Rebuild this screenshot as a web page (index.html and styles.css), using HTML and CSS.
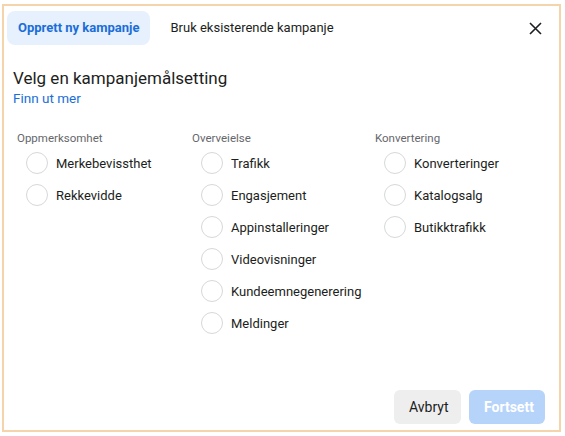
FILE: index.html
```html
<!DOCTYPE html>
<html lang="no">
<head>
<meta charset="utf-8">
<link rel="stylesheet" href="styles.css">
</head>
<body>
<div class="frame">
  <div class="tabs">
    <div class="tab active">Opprett ny kampanje</div>
    <div class="tab">Bruk eksisterende kampanje</div>
    <button class="close" aria-label="Lukk">
      <svg width="13" height="13" viewBox="0 0 13 13"><path d="M1 1L12 12M12 1L1 12" stroke="#1c1e21" stroke-width="1.6" fill="none"/></svg>
    </button>
  </div>
  <div class="intro">
    <h1 class="title">Velg en kampanjemålsetting</h1>
    <a class="link">Finn ut mer</a>
  </div>
  <div class="cols">
    <div class="col c1">
      <div class="label">Oppmerksomhet</div>
      <div class="opt"><span class="radio"></span>Merkebevissthet</div>
      <div class="opt"><span class="radio"></span>Rekkevidde</div>
    </div>
    <div class="col c2">
      <div class="label">Overveielse</div>
      <div class="opt"><span class="radio"></span>Trafikk</div>
      <div class="opt"><span class="radio"></span>Engasjement</div>
      <div class="opt"><span class="radio"></span>Appinstalleringer</div>
      <div class="opt"><span class="radio"></span>Videovisninger</div>
      <div class="opt"><span class="radio"></span>Kundeemnegenerering</div>
      <div class="opt"><span class="radio"></span>Meldinger</div>
    </div>
    <div class="col c3">
      <div class="label">Konvertering</div>
      <div class="opt"><span class="radio"></span>Konverteringer</div>
      <div class="opt"><span class="radio"></span>Katalogsalg</div>
      <div class="opt"><span class="radio"></span>Butikktrafikk</div>
    </div>
  </div>
  <div class="footer">
    <button class="btn cancel">Avbryt</button>
    <button class="btn next">Fortsett</button>
  </div>
</div>
</body>
</html>
```
FILE: styles.css
```css
html, body {
  margin: 0;
  padding: 0;
  background: #fff;
}
body {
  font-family: Roboto, "Liberation Sans", sans-serif;
  color: #1c1e21;
}
.frame {
  box-sizing: border-box;
  margin: 4px 4px 0 2px;
  width: 559px;
  height: 428px;
  border: 2px solid #f6d4ab;
  display: flex;
  flex-direction: column;
}
.tabs {
  display: flex;
  align-items: center;
  padding: 5px 0 0 3px;
}
.tab {
  height: 34px;
  line-height: 34px;
  padding: 0 11px;
  font-size: 13px;
  border-radius: 8px;
  color: #1c1e21;
}
.tab.active {
  background: #e7f0fd;
  color: #1a6ed8;
  font-weight: bold;
  margin-right: 9px;
}
.close {
  margin-left: auto;
  margin-right: 17px;
  border: 0;
  background: none;
  padding: 0;
  width: 13px;
  height: 13px;
  display: flex;
}
.intro {
  padding: 22px 0 0 9px;
}
.title {
  margin: 0;
  font-size: 17px;
  font-weight: normal;
  line-height: 22px;
}
.link {
  display: block;
  font-size: 13.5px;
  color: #1a6ed8;
  line-height: 19px;
}
.cols {
  display: flex;
  padding: 23px 0 0 13px;
}
.col.c1 { width: 175px; }
.col.c2 { width: 183px; }
.label {
  font-size: 11.5px;
  color: #65676b;
  line-height: 14px;
  margin-bottom: 2px;
}
.opt {
  display: flex;
  align-items: center;
  height: 32px;
  font-size: 13px;
  padding-left: 9px;
}
.radio {
  box-sizing: border-box;
  width: 22px;
  height: 22px;
  border: 1px solid #d7d8da;
  border-radius: 50%;
  margin-right: 8px;
}
.footer {
  margin-top: auto;
  display: flex;
  justify-content: flex-end;
  gap: 8px;
  padding: 0 14px 6px 0;
}
.btn {
  height: 34px;
  border: 0;
  border-radius: 6px;
  font-family: Roboto, "Liberation Sans", sans-serif;
  font-size: 14px;
  padding: 0 15px;
}
.btn.cancel {
  background: #eeeeef;
  color: #1c1e21;
  width: 67px;
}
.btn.next {
  background: #b6d3fa;
  color: #fff;
  font-weight: bold;
  width: 76px;
}
```
